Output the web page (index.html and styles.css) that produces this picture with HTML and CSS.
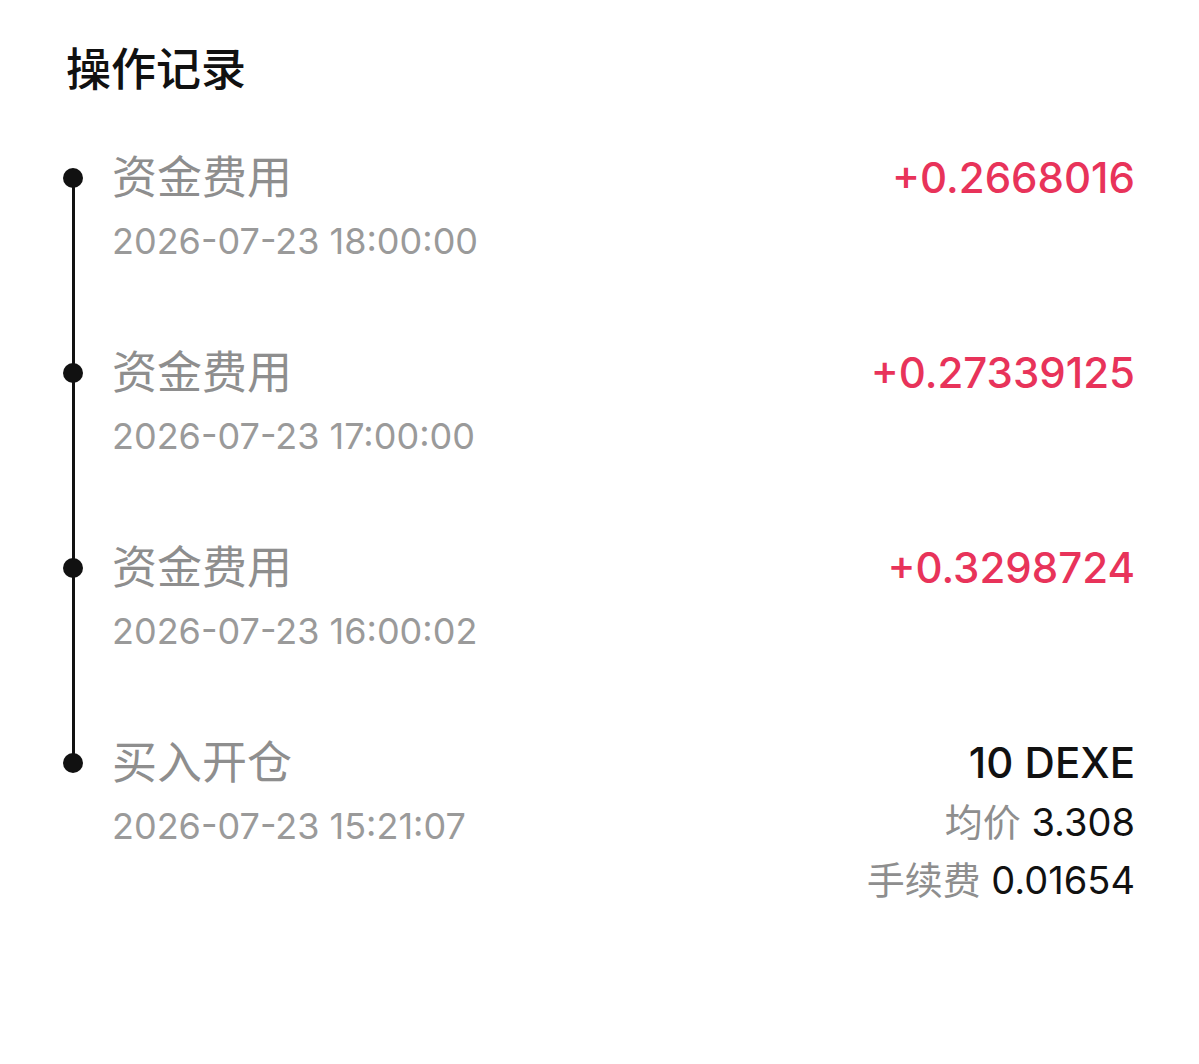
FILE: index.html
```html
<!DOCTYPE html>
<html lang="zh-CN">
<head>
    <meta charset="UTF-8">
    <meta name="viewport" content="width=device-width, initial-scale=1.0">
    <title>操作记录</title>
    <link rel="stylesheet" href="styles.css">
</head>
<body>
    <div class="records">
        <h2 class="records-title">操作记录</h2>
        <ul class="timeline">
            <li class="timeline-item">
                <span class="dot"></span>
                <div class="item-main">
                    <div class="item-type">资金费用</div>
                    <div class="item-time">2026-07-23 18:00:00</div>
                </div>
                <div class="item-side">
                    <div class="amount plus">+0.2668016</div>
                </div>
            </li>
            <li class="timeline-item">
                <span class="dot"></span>
                <div class="item-main">
                    <div class="item-type">资金费用</div>
                    <div class="item-time">2026-07-23 17:00:00</div>
                </div>
                <div class="item-side">
                    <div class="amount plus">+0.27339125</div>
                </div>
            </li>
            <li class="timeline-item">
                <span class="dot"></span>
                <div class="item-main">
                    <div class="item-type">资金费用</div>
                    <div class="item-time">2026-07-23 16:00:02</div>
                </div>
                <div class="item-side">
                    <div class="amount plus">+0.3298724</div>
                </div>
            </li>
            <li class="timeline-item">
                <span class="dot"></span>
                <div class="item-main">
                    <div class="item-type">买入开仓</div>
                    <div class="item-time">2026-07-23 15:21:07</div>
                </div>
                <div class="item-side">
                    <div class="amount">10 DEXE</div>
                    <div class="detail"><span class="detail-label">均价</span> 3.308</div>
                    <div class="detail"><span class="detail-label">手续费</span> 0.01654</div>
                </div>
            </li>
        </ul>
    </div>
</body>
</html>
```

FILE: styles.css
```css
body {
    margin: 0;
    background-color: #fff;
    font-family: Inter, "Noto Sans CJK SC", sans-serif;
    color: #111;
}
.records {
    padding: 42px 64px 0 63px;
}
.records-title {
    margin: 0 0 0 3px;
    font-size: 45px;
    line-height: 56px;
    font-weight: 500;
}
.timeline {
    list-style: none;
    margin: 52px 0 0;
    padding: 0;
}
.timeline-item {
    position: relative;
    display: flex;
    align-items: flex-start;
    height: 195px;
}
.timeline-item:not(:last-child)::before {
    content: "";
    position: absolute;
    left: 9px;
    top: 28px;
    width: 3px;
    height: 195px;
    background-color: #111;
}
.dot {
    flex: none;
    width: 20px;
    height: 20px;
    margin-top: 18px;
    border-radius: 50%;
    background-color: #111;
}
.item-main {
    flex: 1;
    margin-left: 29px;
}
.item-type {
    font-size: 45px;
    line-height: 56px;
    color: #8e8e8e;
}
.item-time {
    margin-top: 12px;
    font-size: 36px;
    line-height: 46px;
    color: #9a9a9a;
}
.item-side {
    text-align: right;
}
.amount {
    font-size: 42px;
    line-height: 56px;
    font-weight: 500;
}
.amount.plus {
    color: #e8335a;
}
.detail {
    margin-top: 4px;
    font-size: 38px;
    line-height: 54px;
}
.detail-label {
    color: #8e8e8e;
}
```
